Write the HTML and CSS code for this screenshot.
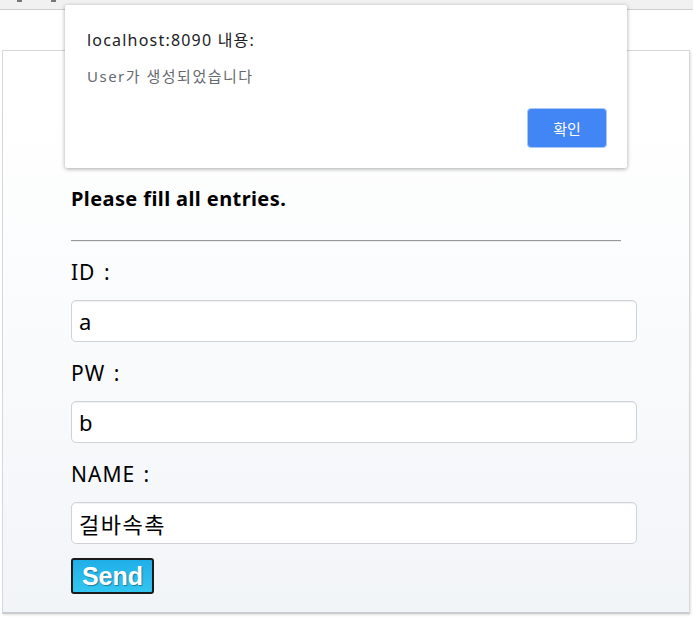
FILE: index.html
```html
<!DOCTYPE html>
<html lang="ko">
<head>
<meta charset="utf-8">
<title>Join</title>
<link rel="stylesheet" href="styles.css">
</head>
<body>
<div class="chrome"><span class="mark m1"></span><span class="mark m2"></span></div>
<main class="card">
  <form class="form">
    <h3 class="title">Please fill all entries.</h3>
    <hr class="rule">
    <label class="label">ID :</label>
    <input class="field" type="text" value="a">
    <label class="label">PW :</label>
    <input class="field" type="text" value="b">
    <label class="label">NAME :</label>
    <input class="field" type="text" value="걸바속촉">
    <div class="actions"><button class="send" type="button">Send</button></div>
  </form>
</main>
<div class="dialog">
  <div class="dlg-title">localhost:8090 내용:</div>
  <div class="dlg-msg">User가 생성되었습니다</div>
  <div class="dlg-actions"><button class="ok" type="button">확인</button></div>
</div>
</body>
</html>
```
FILE: styles.css
```css
* { box-sizing: border-box; }
html, body { margin: 0; padding: 0; }
body {
  background: #ffffff;
  font-family: "Noto Sans", "Noto Sans CJK KR", sans-serif;
  color: #000;
  width: 693px;
  height: 619px;
  overflow: hidden;
  position: relative;
}
.chrome {
  height: 10px;
  background: #f1f1f1;
  border-bottom: 1px solid #d0d0d0;
  position: relative;
}
.mark { position: absolute; top: 0; width: 5px; height: 2px; background: #777; }
.m1 { left: 17px; }
.m2 { left: 51px; }
.card {
  margin: 40px 0 0 2px;
  width: 688px;
  height: 564px;
  border: 1px solid #d6d9dc;
  border-bottom: 2px solid #c9ccd0;
  background: linear-gradient(to bottom, #ffffff 0%, #ffffff 10%, #f2f5f8 100%);
  box-shadow: 1px 1px 2px rgba(0,0,0,0.12);
}
.form {
  display: flex;
  flex-direction: column;
  padding: 136px 0 0 68px;
}
.title {
  margin: 0;
  font-size: 20px;
  font-weight: 700;
  line-height: 24px;
  letter-spacing: 0.4px;
}
.rule {
  margin: 29px 0 0 0;
  width: 550px;
  border: 0;
  border-top: 1px solid #999;
  border-bottom: 1px solid #eee;
  height: 0;
}
.label {
  font-size: 21px;
  line-height: 28px;
  margin-top: 16px;
  letter-spacing: 1px;
  word-spacing: 2px;
}
.field {
  margin-top: 14px;
  width: 566px;
  height: 42px;
  border: 1px solid #cfd2d6;
  border-radius: 5px;
  background: #fff;
  padding: 0 7px;
  font-family: "Noto Sans", "Noto Sans CJK KR", sans-serif;
  font-size: 22px;
  letter-spacing: 1.5px;
  color: #000;
  box-shadow: inset 0 1px 1px rgba(0,0,0,0.06);
}
.field + .label { margin-top: 17px; }
.actions { margin-top: 14px; }
.send {
  width: 83px;
  height: 36px;
  border: 2px solid #1a1a1a;
  border-radius: 3px;
  background: linear-gradient(to bottom, #20aee8, #33c6f0);
  color: #fff;
  font-family: "Liberation Sans", Arial, sans-serif;
  font-weight: 700;
  font-size: 25px;
  line-height: 30px;
  padding: 0;
  text-shadow: 1px 1px 1px rgba(0,0,0,0.35);
}
.dialog {
  position: absolute;
  left: 65px;
  top: 5px;
  width: 562px;
  height: 163px;
  background: #fff;
  border-radius: 2px;
  box-shadow: 0 1px 4px rgba(0,0,0,0.35);
  padding: 23px 20px 0 22px;
  display: flex;
  flex-direction: column;
}
.dlg-title {
  font-size: 16px;
  line-height: 24px;
  color: #202124;
  letter-spacing: 1.2px;
}
.dlg-msg {
  margin-top: 14px;
  font-size: 15px;
  line-height: 20px;
  color: #666a70;
  letter-spacing: 1.5px;
}
.dlg-actions {
  margin-top: 22px;
  display: flex;
  justify-content: flex-end;
}
.ok {
  width: 80px;
  height: 40px;
  border: 1px solid #a8c7fa;
  border-radius: 4px;
  background: #4285f4;
  color: #fff;
  font-family: "Noto Sans CJK KR", sans-serif;
  font-size: 15px;
}
```
